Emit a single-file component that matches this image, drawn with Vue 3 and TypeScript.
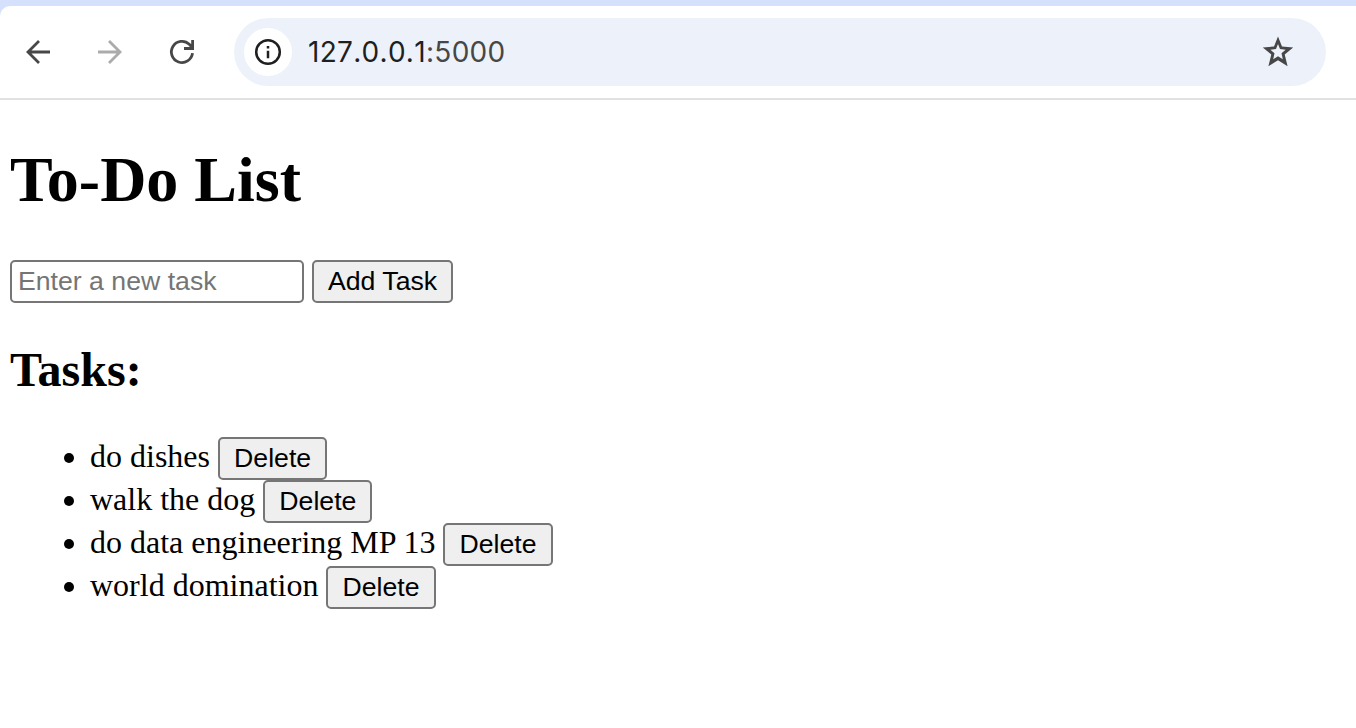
<script setup lang="ts">
import { ref } from 'vue'

interface Task {
  id: number
  title: string
}

const draft = ref('')
const tasks = ref<Task[]>([
  { id: 1, title: 'do dishes' },
  { id: 2, title: 'walk the dog' },
  { id: 3, title: 'do data engineering MP 13' },
  { id: 4, title: 'world domination' },
])

function addTask(): void {
  const title = draft.value.trim()
  if (!title) return
  tasks.value.push({ id: Date.now(), title })
  draft.value = ''
}

function removeTask(id: number): void {
  tasks.value = tasks.value.filter((task) => task.id !== id)
}
</script>

<template>
  <div class="window">
    <header class="toolbar">
      <nav class="nav">
        <svg class="icon" viewBox="0 0 32 32" aria-label="Back">
          <path d="M28 16H6M17 5L6 16L17 27" />
        </svg>
        <svg class="icon disabled" viewBox="0 0 32 32" aria-label="Forward">
          <path d="M4 16H26M15 5L26 16L15 27" />
        </svg>
        <svg class="icon" viewBox="0 0 32 32" aria-label="Reload">
          <path d="M26.5 17.2A10.6 10.6 0 1 1 23.3 8.3L26.3 11.5M26.6 4V12.5H18" />
        </svg>
      </nav>
      <div class="address">
        <span class="info">
          <svg viewBox="0 0 28 28" aria-label="Site information">
            <circle cx="14" cy="14" r="11.8" />
            <path d="M14 12.8V20.2M14 8V10.6" />
          </svg>
        </span>
        <span class="url">127.0.0.1<span class="port">:5000</span></span>
        <svg class="star" viewBox="0 0 32 32" aria-label="Bookmark">
          <path
            fill-rule="evenodd"
            d="M16 .6L20 10.5L31.2 11.4L22.7 18.5L25.6 30.2L16 24.2L6.4 30.2L9.3 18.5L.8 11.4L12 10.5ZM16 8L14 13.1L8.4 13.7L12.5 17.3L11.2 23.2L16 20.3L20.8 23.2L19.5 17.3L23.6 13.7L18 13.1Z"
          />
        </svg>
      </div>
    </header>

    <main class="page">
      <h1>To-Do List</h1>
      <form class="entry" @submit.prevent="addTask">
        <input v-model="draft" type="text" placeholder="Enter a new task" />
        <button type="submit">Add Task</button>
      </form>
      <h2>Tasks:</h2>
      <ul>
        <li v-for="task in tasks" :key="task.id">
          <span class="title">{{ task.title }}</span>
          <button type="button" @click="removeTask(task.id)">Delete</button>
        </li>
      </ul>
    </main>
  </div>
</template>

<style>
body {
  margin: 0;
  background: #fff;
}
</style>

<style scoped>
.window {
  box-sizing: border-box;
  height: 728px;
  padding-top: 6px;
  overflow: hidden;
  background: linear-gradient(#d5e1fc 0 20px, #fff 20px);
}

.toolbar {
  box-sizing: border-box;
  display: flex;
  align-items: center;
  height: 94px;
  padding: 0 30px 0 22px;
  border-bottom: 2px solid #e1e1e1;
  border-top-left-radius: 10px;
  background: #fff;
}

.nav {
  display: flex;
  gap: 40px;
  margin-right: 36px;
}

.icon {
  display: block;
  width: 32px;
  height: 32px;
  fill: none;
  stroke: #474747;
  stroke-width: 2.8;
}

.icon.disabled {
  stroke: #ababab;
}

.address {
  box-sizing: border-box;
  display: flex;
  flex: 1;
  align-items: center;
  height: 68px;
  padding: 0 32px 0 10px;
  border-radius: 34px;
  background: #edf2fa;
}

.info {
  display: flex;
  align-items: center;
  justify-content: center;
  width: 48px;
  height: 48px;
  border-radius: 50%;
  background: #fff;
}

.info svg {
  width: 28px;
  height: 28px;
  fill: none;
  stroke: #1f1f1f;
  stroke-width: 2.5;
}

.url {
  flex: 1;
  margin-left: 16px;
  color: #1f1f1f;
  font: 28px/34px Inter, sans-serif;
  font-kerning: none;
  letter-spacing: 0.3px;
}

.port {
  color: #474747;
}

.star {
  width: 32px;
  height: 32px;
  fill: #474747;
}

.page {
  padding: 0 10px;
  color: #000;
  font-family: 'Liberation Serif', serif;
  font-size: 32px;
}

h1 {
  margin: 43px 0;
  font-size: 64px;
  line-height: 74px;
}

.entry {
  display: flex;
  gap: 8px;
}

input,
button {
  box-sizing: border-box;
  height: 43px;
  border: 2px solid #767676;
  border-radius: 5px;
  font: 26.667px/30px 'Liberation Sans', sans-serif;
}

input {
  width: 294px;
  margin: 0;
  padding: 2px 6px;
  background: #fff;
}

input::placeholder {
  color: #757575;
}

button {
  margin: 0;
  padding: 0 14px 1px;
  background: #efefef;
  color: #000;
}

h2 {
  margin: 40px 0;
  font-size: 48px;
  line-height: 54px;
}

ul {
  margin: 0;
  padding: 0 0 0 80px;
  list-style: none;
}

li {
  display: flex;
  gap: 8px;
  height: 43px;
}

li::before {
  flex: none;
  width: 10px;
  height: 10px;
  margin: 16px 8px 0 -26px;
  border-radius: 50%;
  background: #000;
  content: '';
}

li button {
  width: 109.2px;
}

.title {
  line-height: 38px;
}
</style>
